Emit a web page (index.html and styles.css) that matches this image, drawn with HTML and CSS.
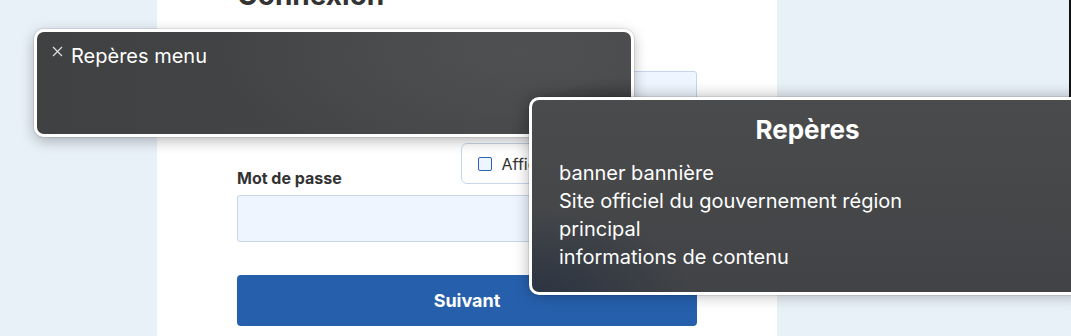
FILE: index.html
```html
<!DOCTYPE html>
<html lang="fr">
<head>
<meta charset="utf-8">
<title>Connexion</title>
<link rel="stylesheet" href="styles.css">
</head>
<body>
<div class="page">
  <main class="column">
    <h1 class="title">Connexion</h1>
    <form class="form">
      <label class="label field-label">Nom d'utilisateur</label>
      <div class="input"></div>
      <div class="pw-row">
        <label class="label pw-label">Mot de passe</label>
        <button type="button" class="show-btn"><span class="box"></span>Afficher le mot de passe</button>
      </div>
      <div class="input"></div>
      <button type="button" class="submit">Suivant</button>
    </form>
  </main>
</div>

<div class="menu-box">
  <span class="close">
    <svg width="11" height="11" viewBox="0 0 11 11"><path d="M1 1L10 10M10 1L1 10" stroke="#e6e6e6" stroke-width="1.1" fill="none"/></svg>
  </span>
  <span class="menu-title">Repères menu</span>
</div>

<div class="landmarks">
  <h2 class="lm-title">Repères</h2>
  <ul class="lm-list">
    <li>banner bannière</li>
    <li>Site officiel du gouvernement région</li>
    <li>principal</li>
    <li>informations de contenu</li>
  </ul>
</div>

<div class="edge"></div>
</body>
</html>
```
FILE: styles.css
```css
html, body {
  margin: 0;
  padding: 0;
}
body {
  background: #e8f0f8;
  font-family: Inter, "Noto Sans", sans-serif;
  color: #333;
  width: 1071px;
  height: 336px;
  overflow: hidden;
  position: relative;
}
.page {
  display: flex;
  padding-left: 157px;
}
.column {
  width: 540px;
  background: #fff;
  padding: 0 0 0 80px;
  height: 336px;
  overflow: hidden;
}
.title {
  margin: -19px 0 0;
  font-size: 28px;
  line-height: 28px;
  font-weight: 700;
  color: #333;
}
.form {
  width: 460px;
  display: flex;
  flex-direction: column;
}
.label {
  font-size: 16px;
  line-height: 20px;
  font-weight: 700;
  color: #333;
}
.field-label {
  margin-top: 34px;
  margin-bottom: 8px;
}
.input {
  height: 45px;
  background: #eef5fe;
  border: 1px solid #c8d5e8;
  border-radius: 3px;
}
.pw-row {
  display: flex;
  justify-content: space-between;
  align-items: flex-end;
  margin-top: 25px;
  margin-bottom: 11px;
}
.pw-label {
  margin-bottom: -4px;
}
.show-btn {
  display: flex;
  align-items: center;
  gap: 10px;
  height: 41px;
  padding: 0 10px 0 16px;
  background: #fff;
  border: 1px solid #c8d6ea;
  border-radius: 6px;
  font-family: inherit;
  font-size: 16px;
  color: #333;
}
.box {
  width: 12px;
  height: 12px;
  border: 1.5px solid #2a64b0;
  border-radius: 2px;
  background: #eef5fe;
}
.submit {
  margin-top: 33px;
  height: 51px;
  border: none;
  border-radius: 4px;
  background: #2660ad;
  color: #fff;
  font-family: inherit;
  font-size: 18px;
  font-weight: 700;
}

.menu-box {
  position: absolute;
  left: 34px;
  top: 29px;
  width: 594px;
  height: 102px;
  border: 3px solid #fff;
  border-radius: 10px;
  background:
    radial-gradient(ellipse 120px 60px at 590px 105px, rgba(30,30,30,0.8), rgba(30,30,30,0) 100%),
    radial-gradient(ellipse 300px 120px at 480px 20px, rgba(80,81,82,0.9), rgba(80,81,82,0) 100%),
    linear-gradient(to right, #3f4142, #47484a);
  box-shadow: 0 0 0 1px rgba(0,0,0,0.08), 0 4px 14px rgba(0,0,0,0.28);
  display: flex;
  align-items: flex-start;
}
.close {
  margin: 14px 0 0 15px;
  width: 11px;
  height: 11px;
  display: flex;
}
.menu-title {
  margin: 12px 0 0 8px;
  font-size: 20px;
  line-height: 24px;
  color: #fff;
}

.landmarks {
  position: absolute;
  left: 529px;
  top: 97px;
  width: 551px;
  height: 192px;
  border: 3px solid #fff;
  border-radius: 10px;
  background:
    radial-gradient(ellipse 160px 90px at 0px 200px, rgba(40,50,66,0.9), rgba(40,50,66,0) 100%),
    linear-gradient(to bottom, #4a4b4c, #414346);
  box-shadow: 0 0 0 1px rgba(0,0,0,0.08), 0 0 16px rgba(0,0,0,0.3);
  color: #fff;
}
.lm-title {
  margin: 14px 0 0;
  text-align: center;
  font-size: 26px;
  line-height: 32px;
  font-weight: 700;
}
.lm-list {
  list-style: none;
  margin: 13px 0 0;
  padding: 0 0 0 27px;
  font-size: 20px;
  line-height: 28px;
}

.edge {
  position: absolute;
  right: 0;
  top: 0;
  width: 2px;
  height: 97px;
  background: #111;
}
```
